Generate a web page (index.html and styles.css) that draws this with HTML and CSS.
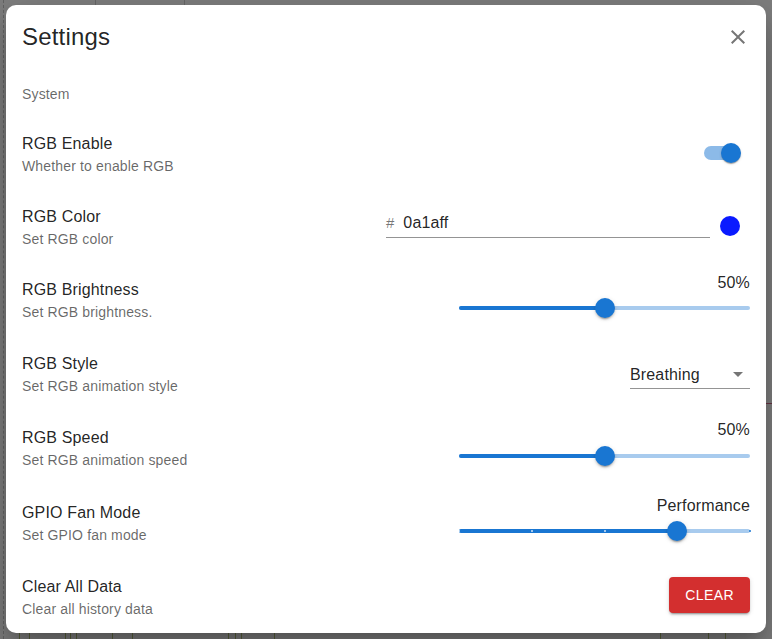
FILE: index.html
```html
<!DOCTYPE html>
<html lang="en">
<head>
<meta charset="utf-8">
<title>Settings</title>
<link rel="stylesheet" href="styles.css">
</head>
<body>
<div class="page">
  <div class="chart">
    <span class="grid-line" style="left:3px"></span>
    <span class="tick" style="left:95px"></span>
    <span class="tick" style="left:184px"></span>
    <span class="bar" style="left:19px"></span>
    <span class="bar" style="left:29px"></span>
    <span class="bar" style="left:65px"></span>
    <span class="bar" style="left:70px"></span>
    <span class="bar" style="left:76px"></span>
    <span class="bar" style="left:112px"></span>
    <span class="bar" style="left:132px"></span>
    <span class="bar" style="left:228px"></span>
    <span class="bar" style="left:235px"></span>
    <span class="bar" style="left:241px"></span>
    <span class="bar" style="left:274px"></span>
    <span class="bar" style="left:660px"></span>
    <span class="bar" style="left:708px"></span>
    <span class="bar" style="left:725px"></span>
    <span class="redline"></span>
  </div>
  <div class="backdrop">
    <div class="dialog">
      <header class="dialog-header">
        <h2 class="dialog-title">Settings</h2>
        <button class="icon-btn close-btn" aria-label="close">
          <svg viewBox="0 0 24 24" width="24" height="24"><path fill="currentColor" d="M19 6.41 17.59 5 12 10.59 6.41 5 5 6.41 10.59 12 5 17.59 6.41 19 12 13.41 17.59 19 19 17.59 13.41 12z"/></svg>
        </button>
      </header>
      <div class="dialog-body">
        <div class="section-label">System</div>
        <div class="rows">
          <div class="row row-enable">
            <div class="row-text">
              <div class="row-title">RGB Enable</div>
              <div class="row-sub">Whether to enable RGB</div>
            </div>
            <div class="switch">
              <span class="switch-track"></span>
              <span class="switch-thumb"></span>
            </div>
          </div>

          <div class="row row-color">
            <div class="row-text">
              <div class="row-title">RGB Color</div>
              <div class="row-sub">Set RGB color</div>
            </div>
            <div class="color-control">
              <div class="text-field">
                <span class="adornment">#</span>
                <span class="input-value">0a1aff</span>
              </div>
              <div class="swatch-btn"><span class="swatch"></span></div>
            </div>
          </div>

          <div class="row row-brightness">
            <div class="row-text">
              <div class="row-title">RGB Brightness</div>
              <div class="row-sub">Set RGB brightness.</div>
            </div>
            <div class="slider-control">
              <div class="slider-label">50%</div>
              <div class="slider">
                <span class="rail"></span>
                <span class="track" style="width:50%"></span>
                <span class="thumb" style="left:50%"></span>
              </div>
            </div>
          </div>

          <div class="row row-style">
            <div class="row-text">
              <div class="row-title">RGB Style</div>
              <div class="row-sub">Set RGB animation style</div>
            </div>
            <div class="select">
              <span class="select-value">Breathing</span>
              <svg class="select-arrow" viewBox="0 0 24 24" width="24" height="24"><path fill="currentColor" d="M7 10l5 5 5-5z"/></svg>
            </div>
          </div>

          <div class="row row-speed">
            <div class="row-text">
              <div class="row-title">RGB Speed</div>
              <div class="row-sub">Set RGB animation speed</div>
            </div>
            <div class="slider-control">
              <div class="slider-label">50%</div>
              <div class="slider">
                <span class="rail"></span>
                <span class="track" style="width:50%"></span>
                <span class="thumb" style="left:50%"></span>
              </div>
            </div>
          </div>

          <div class="row row-fan">
            <div class="row-text">
              <div class="row-title">GPIO Fan Mode</div>
              <div class="row-sub">Set GPIO fan mode</div>
            </div>
            <div class="slider-control">
              <div class="slider-label">Performance</div>
              <div class="slider">
                <span class="rail"></span>
                <span class="track" style="width:75%"></span>
                <span class="mark mark-active" style="left:0%"></span>
                <span class="mark mark-active" style="left:25%"></span>
                <span class="mark mark-active" style="left:50%"></span>
                <span class="mark" style="left:100%"></span>
                <span class="thumb" style="left:75%"></span>
              </div>
            </div>
          </div>

          <div class="row row-clear">
            <div class="row-text">
              <div class="row-title">Clear All Data</div>
              <div class="row-sub">Clear all history data</div>
            </div>
            <button class="btn-danger">Clear</button>
          </div>
        </div>
      </div>
    </div>
  </div>
</div>
</body>
</html>
```

FILE: styles.css
```css
* { box-sizing: border-box; }

html, body {
  margin: 0;
  padding: 0;
  width: 100%;
  height: 100%;
  overflow: hidden;
}

body {
  font-family: "Liberation Sans", Arial, Helvetica, sans-serif;
  color: rgba(0, 0, 0, 0.87);
}

.page {
  position: relative;
  width: 100vw;
  height: 100vh;
  background: #fff;
}

.chart {
  position: absolute;
  inset: 0;
}

.grid-line {
  position: absolute;
  top: 0;
  bottom: 0;
  width: 0;
  border-left: 1px dashed #c8c8c8;
}

.tick {
  position: absolute;
  top: 0;
  width: 1px;
  height: 10px;
  background: #d0d0d0;
}

.bar {
  position: absolute;
  bottom: 0;
  width: 1px;
  height: 30px;
  background: #b7c47a;
}

.redline {
  position: absolute;
  left: 760px;
  top: 403px;
  width: 12px;
  height: 1px;
  background: #d56a8a;
}

.backdrop {
  position: absolute;
  inset: 0;
  background: rgba(0, 0, 0, 0.5);
  display: flex;
  align-items: flex-start;
  justify-content: center;
  padding-top: 5px;
}

.dialog {
  width: 760px;
  background: #fff;
  border-radius: 10px;
  box-shadow: 0 11px 15px -7px rgba(0,0,0,0.2), 0 24px 38px 3px rgba(0,0,0,0.14), 0 9px 46px 8px rgba(0,0,0,0.12);
  padding-bottom: 14px;
}

.dialog-header {
  display: flex;
  align-items: center;
  justify-content: space-between;
  padding: 16px 16px;
  height: 64px;
}

.dialog-title {
  margin: 0;
  font-size: 24px;
  font-weight: 400;
  line-height: 32px;
  letter-spacing: 0.18px;
  color: rgba(0, 0, 0, 0.87);
}

.icon-btn {
  border: 0;
  background: none;
  padding: 0;
  width: 24px;
  height: 24px;
  display: flex;
  align-items: center;
  justify-content: center;
  cursor: pointer;
}

.close-btn {
  color: rgba(0, 0, 0, 0.54);
}

.dialog-body {
  padding: 0 16px;
}

.section-label {
  margin-top: 15px;
  font-size: 14px;
  line-height: 20px;
  letter-spacing: 0.15px;
  color: rgba(0, 0, 0, 0.6);
}

.rows {
  display: flex;
  flex-direction: column;
}

.row {
  display: flex;
  align-items: flex-start;
  justify-content: space-between;
  height: 44px;
}

.row-enable { margin-top: 28px; }
.row-color { margin-top: 29px; }
.row-brightness { margin-top: 29px; }
.row-style { margin-top: 30px; }
.row-speed { margin-top: 29.5px; }
.row-fan { margin-top: 31.5px; }
.row-clear { margin-top: 30px; }

.row-title {
  font-size: 16px;
  line-height: 24px;
  letter-spacing: 0.15px;
  color: rgba(0, 0, 0, 0.87);
}

.row-sub {
  font-size: 14px;
  line-height: 20px;
  letter-spacing: 0.15px;
  color: rgba(0, 0, 0, 0.6);
}

/* Switch */
.switch {
  position: relative;
  width: 58px;
  height: 38px;
  margin-top: 2px;
}

.switch-track {
  position: absolute;
  left: 12px;
  top: 12px;
  width: 34px;
  height: 14px;
  border-radius: 7px;
  background: #1976d2;
  opacity: 0.5;
}

.switch-thumb {
  position: absolute;
  left: 29px;
  top: 9px;
  width: 20px;
  height: 20px;
  border-radius: 50%;
  background: #1976d2;
  box-shadow: 0 2px 1px -1px rgba(0,0,0,0.2), 0 1px 1px 0 rgba(0,0,0,0.14), 0 1px 3px 0 rgba(0,0,0,0.12);
}

/* Color field */
.color-control {
  display: flex;
  align-items: flex-start;
}

.text-field {
  width: 324px;
  height: 32px;
  margin-top: 1px;
  display: flex;
  align-items: flex-start;
  padding-top: 5px;
  border-bottom: 1px solid rgba(0, 0, 0, 0.42);
}

.adornment {
  font-size: 15px;
  line-height: 23px;
  color: rgba(0, 0, 0, 0.54);
  margin-right: 9px;
}

.input-value {
  font-size: 16px;
  line-height: 23px;
  letter-spacing: 0.15px;
  color: rgba(0, 0, 0, 0.87);
}

.swatch-btn {
  width: 40px;
  height: 40px;
  margin-top: 1px;
  display: flex;
  align-items: center;
  justify-content: center;
}

.swatch {
  width: 20px;
  height: 20px;
  border-radius: 50%;
  background: #0a1aff;
}

/* Slider */
.slider-control {
  width: 291px;
  margin-top: -7.5px;
  display: flex;
  flex-direction: column;
}

.slider-label {
  text-align: right;
  font-size: 16px;
  line-height: 24px;
  letter-spacing: 0.15px;
  color: rgba(0, 0, 0, 0.87);
}

.slider {
  position: relative;
  height: 27px;
}

.rail {
  position: absolute;
  left: 0;
  right: 0;
  top: 11.5px;
  height: 4px;
  border-radius: 2px;
  background: #1976d2;
  opacity: 0.38;
}

.track {
  position: absolute;
  left: 0;
  top: 11.5px;
  height: 4px;
  border-radius: 2px;
  background: #1976d2;
}

.thumb {
  position: absolute;
  top: 13.5px;
  width: 20px;
  height: 20px;
  border-radius: 50%;
  background: #1976d2;
  transform: translate(-50%, -50%);
  box-shadow: 0 3px 1px -2px rgba(0,0,0,0.2), 0 2px 2px 0 rgba(0,0,0,0.14), 0 1px 5px 0 rgba(0,0,0,0.12);
}

.mark {
  position: absolute;
  top: 12.5px;
  width: 2px;
  height: 2px;
  border-radius: 1px;
  background: #1976d2;
  transform: translateX(-50%);
}

.mark-active {
  background: rgba(255, 255, 255, 0.8);
}

/* Select */
.select {
  position: relative;
  width: 120px;
  height: 32px;
  margin-top: 5px;
  padding-top: 6px;
  border-bottom: 1px solid rgba(0, 0, 0, 0.42);
}

.select-value {
  display: block;
  font-size: 16px;
  line-height: 23px;
  letter-spacing: 0.15px;
  color: rgba(0, 0, 0, 0.87);
}

.select-arrow {
  position: absolute;
  right: 0;
  top: 5px;
  color: rgba(0, 0, 0, 0.54);
}

/* Button */
.btn-danger {
  margin-top: 2px;
  height: 36px;
  padding: 6px 16px;
  border: 0;
  border-radius: 4px;
  background: #d32f2f;
  color: #fff;
  font-family: "Liberation Sans", Arial, Helvetica, sans-serif;
  font-size: 14px;
  font-weight: 400;
  line-height: 24px;
  letter-spacing: 0.4px;
  text-transform: uppercase;
  box-shadow: 0 3px 1px -2px rgba(0,0,0,0.2), 0 2px 2px 0 rgba(0,0,0,0.14), 0 1px 5px 0 rgba(0,0,0,0.12);
  cursor: pointer;
}
```
